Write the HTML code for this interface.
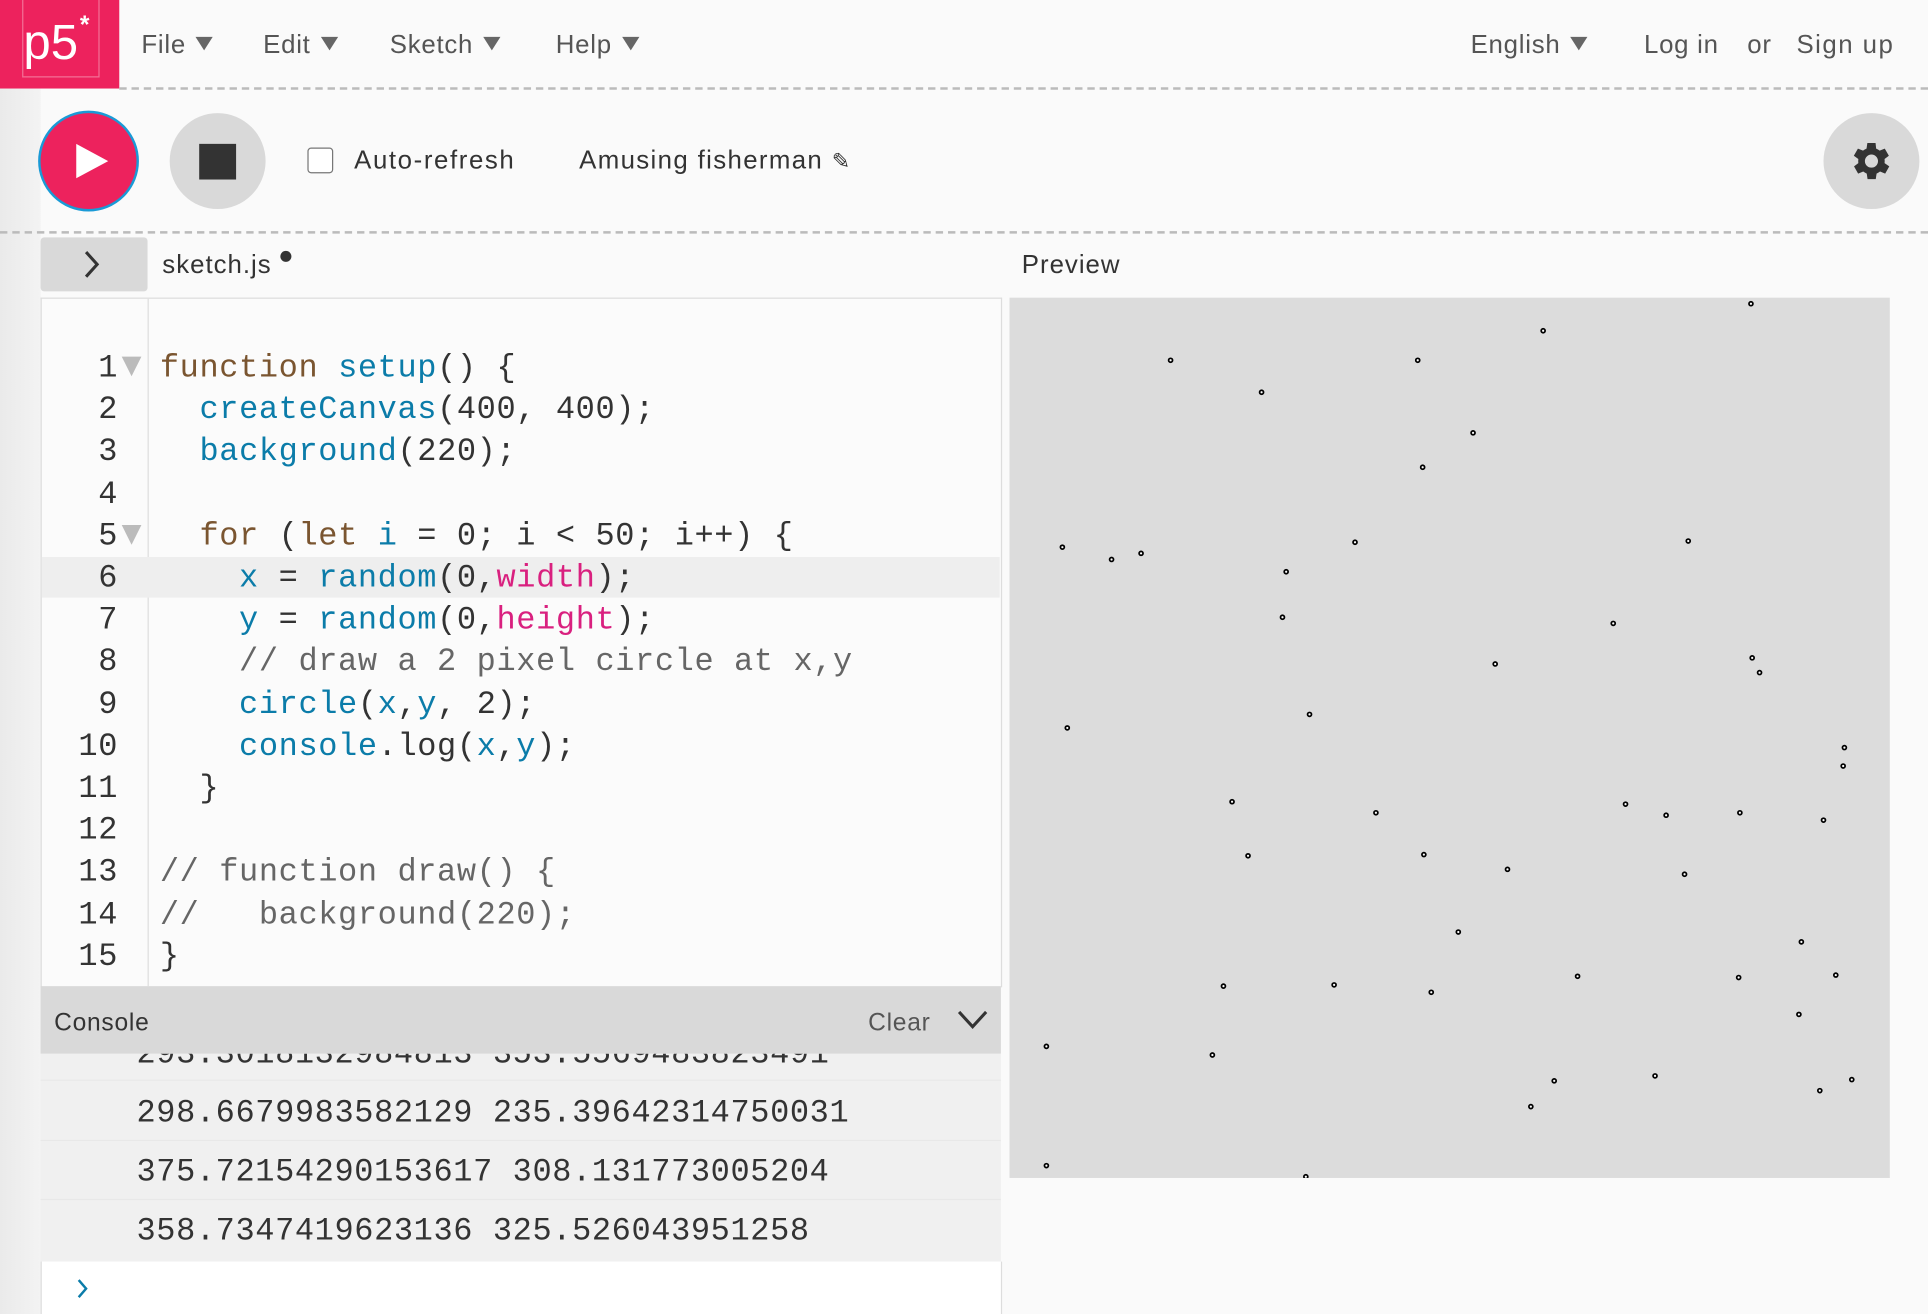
<!DOCTYPE html>
<html><head><meta charset="utf-8"><style>
html,body{margin:0;padding:0;width:1928px;height:1314px;overflow:hidden;background:#fafafa}
#w{position:absolute;left:0;top:0;width:1568px;height:1069px;transform:scale(1.2296);transform-origin:0 0;font-family:"Liberation Sans",sans-serif;color:#333}
.a{position:absolute}
.menu{font-size:21px;color:#555;top:25px;letter-spacing:0.6px}
.tri{display:inline-block;width:0;height:0;border-left:7px solid transparent;border-right:7px solid transparent;border-top:11px solid #666;margin-left:8px;vertical-align:2px}
.mono{font-family:"Liberation Mono",monospace;font-size:26px;letter-spacing:0.5px}
.f{color:#0b7ca9}.k{color:#7a5530}.p{color:#d9207f}.c{color:#666}
</style></head><body><div id="w">
<div class="a" style="left:0;top:0;width:33px;height:1069px;background:linear-gradient(to right,#eaeaea,#f3f3f3)"></div>
<div class="a" style="left:0;top:0;width:97px;height:72px;background:#ed225d"></div>
<div class="a" style="left:18px;top:0;width:61px;height:62px;border:1px solid rgba(255,255,255,0.35);border-top:none"></div>
<div class="a" style="left:19px;top:10px;font-size:40px;color:#fff;line-height:50px">p5</div>
<div class="a" style="left:65px;top:10px;font-size:20px;color:#fff;font-weight:bold">*</div>
<div class="a menu" style="left:115px">File<span class="tri"></span></div>
<div class="a menu" style="left:214px">Edit<span class="tri"></span></div>
<div class="a menu" style="left:317px">Sketch<span class="tri"></span></div>
<div class="a menu" style="left:452px">Help<span class="tri"></span></div>
<div class="a menu" style="left:1196px">English<span class="tri"></span></div>
<div class="a menu" style="left:1337px">Log in</div>
<div class="a menu" style="left:1421px">or</div>
<div class="a menu" style="left:1461px;letter-spacing:1.2px">Sign up</div>
<div class="a" style="left:97px;top:71px;width:1471px;border-top:2px dashed #bbb"></div>
<div class="a" style="left:31px;top:90px;width:78px;height:78px;border-radius:50%;background:#ed225d;border:2px solid #1a9ad6"></div>
<div class="a" style="left:62px;top:117px;width:0;height:0;border-top:14px solid transparent;border-bottom:14px solid transparent;border-left:26px solid #fff"></div>
<div class="a" style="left:138px;top:92px;width:78px;height:78px;border-radius:50%;background:#d9d9d9"></div>
<div class="a" style="left:162px;top:117px;width:30px;height:29px;background:#333"></div>
<div class="a" style="left:250px;top:120px;width:19px;height:19px;border:1.5px solid #777;border-radius:3px;background:#fff"></div>
<div class="a" style="left:288px;top:119px;font-size:21px;color:#333;letter-spacing:1.3px">Auto-refresh</div>
<div class="a" style="left:471px;top:119px;font-size:21px;color:#333;letter-spacing:1.1px">Amusing fisherman <span style="font-size:18px">✎</span></div>
<div class="a" style="left:1483px;top:92px;width:78px;height:78px;border-radius:50%;background:#d9d9d9"></div>
<svg class="a" style="left:1502px;top:111px" width="40" height="40" viewBox="0 0 24 24"><path fill="#333" d="M19.4 13a7.5 7.5 0 0 0 0-2l2.1-1.6-2-3.5-2.5 1a7.6 7.6 0 0 0-1.7-1L15 3.2h-4l-.4 2.7a7.6 7.6 0 0 0-1.7 1l-2.5-1-2 3.5L6.6 11a7.5 7.5 0 0 0 0 2l-2.1 1.6 2 3.5 2.5-1a7.6 7.6 0 0 0 1.7 1l.4 2.7h4l.4-2.7a7.6 7.6 0 0 0 1.7-1l2.5 1 2-3.5zM13 15.2a3.2 3.2 0 1 1 0-6.4 3.2 3.2 0 0 1 0 6.4z" transform="translate(-1 0)"/></svg>
<div class="a" style="left:0;top:188px;width:1568px;border-top:2px dashed #bbb"></div>
<div class="a" style="left:33px;top:193px;width:87px;height:44px;background:#d9d9d9;border-radius:3px"></div>
<svg class="a" style="left:64px;top:202px" width="22" height="26" viewBox="0 0 22 26"><path d="M6 3l9 10-9 10" fill="none" stroke="#333" stroke-width="2.5"/></svg>
<div class="a" style="left:132px;top:204px;font-size:21px;color:#333;letter-spacing:0.8px">sketch.js</div>
<div class="a" style="left:228px;top:204px;width:9px;height:9px;border-radius:50%;background:#333"></div>
<div class="a" style="left:831px;top:204px;font-size:21px;color:#333;letter-spacing:0.8px">Preview</div>
<div class="a" style="left:33px;top:242px;width:780px;height:560px;background:#fbfbfb;border:1px solid #ddd;border-bottom:none"></div>
<div class="a" style="left:120px;top:243px;width:1px;height:559px;background:#ddd"></div>
<div class="a" style="left:34px;top:453px;width:779px;height:33px;background:#eeeeee"></div>
<div class="a" style="left:34px;top:282px;width:779px;height:520px">
<div style="position:absolute;left:65px;top:8px;width:0;height:0;border-left:8px solid transparent;border-right:8px solid transparent;border-top:16px solid #bbb"></div>
<div style="position:absolute;left:65px;top:145px;width:0;height:0;border-left:8px solid transparent;border-right:8px solid transparent;border-top:16px solid #bbb"></div>
</div>
<div class="a mono" style="left:34px;top:282px;line-height:34.2px">
<div style="position:relative;width:62px;text-align:right;color:#333">1<br>2<br>3<br>4<br>5<br>6<br>7<br>8<br>9<br>10<br>11<br>12<br>13<br>14<br>15</div>
</div>
<div class="a mono" style="left:130px;top:282px;line-height:34.2px;white-space:pre"><span class="k">function</span> <span class="f">setup</span>() {
  <span class="f">createCanvas</span>(400, 400);
  <span class="f">background</span>(220);

  <span class="k">for</span> (<span class="k">let</span> <span class="f">i</span> = 0; i &lt; 50; i++) {
    <span class="f">x</span> = <span class="f">random</span>(0,<span class="p">width</span>);
    <span class="f">y</span> = <span class="f">random</span>(0,<span class="p">height</span>);
    <span class="c">// draw a 2 pixel circle at x,y</span>
    <span class="f">circle</span>(<span class="f">x</span>,<span class="f">y</span>, 2);
    <span class="f">console</span>.log(<span class="f">x</span>,<span class="f">y</span>);
  }

<span class="c">// function draw() {</span>
<span class="c">//   background(220);</span>
}</div>
<div class="a" style="left:33px;top:802px;width:781px;height:55px;background:#d9d9d9"></div>
<div class="a" style="left:44px;top:821px;font-size:20px;color:#333;letter-spacing:0.6px">Console</div>
<div class="a" style="left:706px;top:821px;font-size:20px;color:#555;letter-spacing:0.6px">Clear</div>
<svg class="a" style="left:778px;top:820px" width="26" height="20" viewBox="0 0 26 20"><path d="M2 3l11 12 11-12" fill="none" stroke="#333" stroke-width="2.5"/></svg>
<div class="a" style="left:33px;top:857px;width:781px;height:169px;background:#f0f0f0;overflow:hidden">
<div class="mono" style="position:absolute;left:78px;top:-24px;line-height:48px;white-space:pre;color:#333">293.3018132984813 353.5569483823491
298.6679983582129 235.39642314750031
375.72154290153617 308.131773005204
358.7347419623136 325.526043951258</div>
<div style="position:absolute;left:0;top:21px;width:781px;height:1px;background:#e8e8e8"></div>
<div style="position:absolute;left:0;top:70px;width:781px;height:1px;background:#e8e8e8"></div>
<div style="position:absolute;left:0;top:118px;width:781px;height:1px;background:#e8e8e8"></div>
</div>
<div class="a" style="left:33px;top:1026px;width:780px;height:43px;background:#fff;border-left:1px solid #ddd;border-right:1px solid #ddd"></div>
<svg class="a" style="left:60px;top:1038px" width="14" height="20" viewBox="0 0 14 20"><path d="M4 3l6 7-6 7" fill="none" stroke="#0b7ca9" stroke-width="2"/></svg>
<svg class="a" style="left:821px;top:242px" width="716" height="716" viewBox="821 242 716 716">
<rect x="821" y="242" width="716" height="716" fill="#dcdcdc"/>
<g fill="#fff" stroke="#000" stroke-width="1.4">
<circle cx="1424" cy="247" r="1.6"/><circle cx="1255" cy="269" r="1.6"/><circle cx="952" cy="293" r="1.6"/><circle cx="1153" cy="293" r="1.6"/><circle cx="1026" cy="319" r="1.6"/><circle cx="1198" cy="352" r="1.6"/><circle cx="1157" cy="380" r="1.6"/><circle cx="864" cy="445" r="1.6"/><circle cx="904" cy="455" r="1.6"/><circle cx="928" cy="450" r="1.6"/><circle cx="1102" cy="441" r="1.6"/><circle cx="1373" cy="440" r="1.6"/><circle cx="1046" cy="465" r="1.6"/><circle cx="1043" cy="502" r="1.6"/><circle cx="1312" cy="507" r="1.6"/><circle cx="1216" cy="540" r="1.6"/><circle cx="1425" cy="535" r="1.6"/><circle cx="1431" cy="547" r="1.6"/><circle cx="1065" cy="581" r="1.6"/><circle cx="868" cy="592" r="1.6"/><circle cx="1500" cy="608" r="1.6"/><circle cx="1499" cy="623" r="1.6"/><circle cx="1002" cy="652" r="1.6"/><circle cx="1119" cy="661" r="1.6"/><circle cx="1322" cy="654" r="1.6"/><circle cx="1355" cy="663" r="1.6"/><circle cx="1415" cy="661" r="1.6"/><circle cx="1483" cy="667" r="1.6"/><circle cx="1015" cy="696" r="1.6"/><circle cx="1158" cy="695" r="1.6"/><circle cx="1226" cy="707" r="1.6"/><circle cx="1370" cy="711" r="1.6"/><circle cx="1186" cy="758" r="1.6"/><circle cx="1465" cy="766" r="1.6"/><circle cx="995" cy="802" r="1.6"/><circle cx="1085" cy="801" r="1.6"/><circle cx="1164" cy="807" r="1.6"/><circle cx="1283" cy="794" r="1.6"/><circle cx="1414" cy="795" r="1.6"/><circle cx="1493" cy="793" r="1.6"/><circle cx="1463" cy="825" r="1.6"/><circle cx="851" cy="851" r="1.6"/><circle cx="986" cy="858" r="1.6"/><circle cx="1264" cy="879" r="1.6"/><circle cx="1346" cy="875" r="1.6"/><circle cx="1506" cy="878" r="1.6"/><circle cx="1480" cy="887" r="1.6"/><circle cx="1245" cy="900" r="1.6"/><circle cx="851" cy="948" r="1.6"/><circle cx="1062" cy="957" r="1.6"/>
</g></svg>
</div></body></html>
